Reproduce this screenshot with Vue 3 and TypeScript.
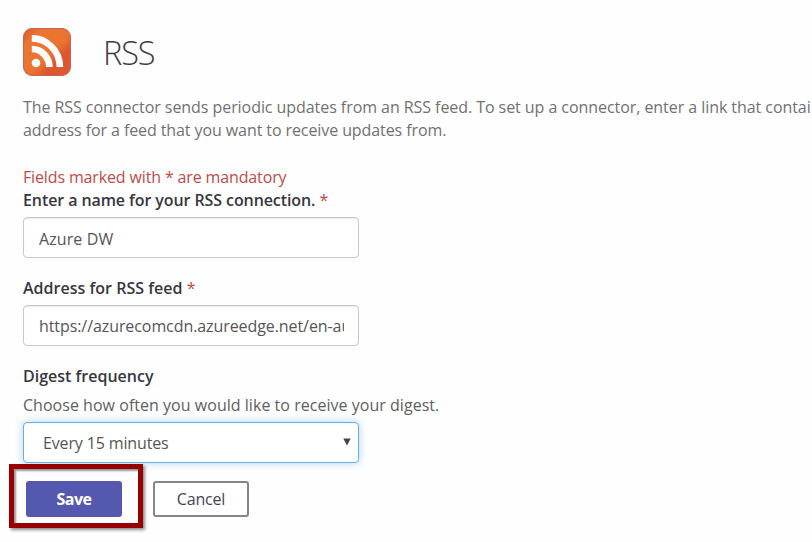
<script setup lang="ts">
import { ref } from 'vue'

const connectionName = ref<string>('Azure DW')
const feedAddress = ref<string>('https://azurecomcdn.azureedge.net/en-au/updates/feed/')
const frequencies: string[] = ['Every 15 minutes']
const frequency = ref<string>(frequencies[0])
</script>

<template>
  <main class="page">
    <header class="header">
      <svg class="logo" viewBox="0 0 48 48" aria-hidden="true">
        <defs>
          <linearGradient id="tile" x1="0" y1="0" x2="1" y2="1">
            <stop offset="0" stop-color="#d9572f" />
            <stop offset="0.2" stop-color="#ea7430" />
            <stop offset="0.55" stop-color="#ea7430" />
            <stop offset="0.72" stop-color="#db5530" />
            <stop offset="1" stop-color="#de5a30" />
          </linearGradient>
        </defs>
        <rect x="0.5" y="0.5" width="47" height="47" rx="8.5" fill="url(#tile)" stroke="#c56458" />
        <circle cx="13" cy="35" r="4.3" fill="#fff" />
        <path d="M8.8 21A17.6 18.1 0 0 1 26.4 39.1" fill="none" stroke="#fff" stroke-width="6.7" />
        <path d="M8.8 10.3A28.1 28.8 0 0 1 36.9 39.1" fill="none" stroke="#fff" stroke-width="6.7" />
      </svg>
      <h1 class="title">RSS</h1>
    </header>

    <p class="intro">
      <span class="intro-first">The RSS connector sends periodic updates from an RSS feed. To set up a connector, enter a link that contai</span><br>
      <span class="intro-second">address for a feed that you want to receive updates from.</span>
    </p>

    <form class="form" @submit.prevent>
      <p class="mandatory">Fields marked with * are mandatory</p>
      <label class="label name-label" for="name">Enter a name for your RSS connection. <span class="star">*</span></label>
      <input id="name" v-model="connectionName" class="control name" type="text">

      <label class="label gap address-label" for="address">Address for RSS feed <span class="star">*</span></label>
      <input id="address" v-model="feedAddress" class="control address" type="text">

      <label class="label gap digest-label" for="frequency">Digest frequency</label>
      <p class="hint">Choose how often you would like to receive your digest.</p>
      <div class="select-wrap">
        <select id="frequency" v-model="frequency" class="control select">
          <option v-for="item in frequencies" :key="item">{{ item }}</option>
        </select>
        <svg class="arrow" viewBox="0 0 8 8" aria-hidden="true"><path d="M0.3 0.5H7.7L4 7.5Z" fill="#444" /></svg>
      </div>

      <div class="actions">
        <div class="highlight">
          <button class="button save" type="submit">Save</button>
        </div>
        <button class="button cancel" type="button">Cancel</button>
      </div>
    </form>
  </main>
</template>

<style>
body {
  background: #fefefe;
  overflow: hidden;
}
</style>

<style scoped>
.page {
  box-sizing: border-box;
  width: 812px;
  height: 542px;
  padding: 28px 0 0 23px;
  overflow: hidden;
  font: 16px/23px "Open Sans", "Noto Sans", sans-serif;
  color: #666;
}
.header {
  display: flex;
  gap: 32px;
  height: 48px;
}
.logo {
  width: 48px;
  height: 48px;
}
.title {
  margin: 0;
  font-size: 32.5px;
  line-height: 50px;
  font-weight: 300;
  letter-spacing: -1.1px;
  color: #3c3c44;
}
p {
  margin: 0;
}
.intro {
  margin-top: 20px;
  white-space: nowrap;
  color: #717171;
}
.intro-first {
  letter-spacing: -0.06px;
}
.intro-second {
  letter-spacing: -0.09px;
}
.form {
  margin-top: 24px;
}
.mandatory,
.star {
  color: #bd4b49;
}
.mandatory {
  letter-spacing: -0.14px;
}
.label {
  display: block;
  font-weight: 600;
  color: #37373f;
}
.name-label {
  letter-spacing: -0.09px;
}
.address-label {
  letter-spacing: 0.02px;
}
.star {
  font-weight: 400;
}
.control {
  display: block;
  box-sizing: border-box;
  width: 336px;
  height: 41px;
  margin: 5px 0 0;
  padding: 3px 14px 0 15px;
  border: 1px solid #c8c8c8;
  border-radius: 4px;
  outline: none;
  background: #fff;
  box-shadow: inset 0 1px 1px rgba(0, 0, 0, 0.08);
  font: inherit;
  color: #555;
}
.name {
  letter-spacing: 0.1px;
}
.address {
  padding-top: 1px;
  letter-spacing: -0.08px;
}
.gap {
  margin-top: 19px;
}
.hint {
  margin-top: 6px;
  letter-spacing: 0.03px;
  color: #606060;
}
.select-wrap {
  position: relative;
  width: 336px;
}
.select {
  appearance: none;
  padding: 1px 30px 0 19px;
  border-color: #66afe9;
  box-shadow: inset 0 1px 1px rgba(0, 0, 0, 0.04), 0 0 8px rgba(102, 175, 233, 0.5);
  letter-spacing: -0.14px;
}
.arrow {
  position: absolute;
  right: 8px;
  top: 16px;
  width: 8px;
  height: 8px;
}
.actions {
  display: flex;
  align-items: center;
  gap: 10px;
  margin: 1px 0 0 -14px;
  position: relative;
}
.highlight {
  box-sizing: border-box;
  width: 134px;
  height: 64px;
  padding: 12px;
  border: 5px solid #960003;
  box-shadow: 2px 2px 3px rgba(0, 0, 0, 0.45), inset 2px 2px 2px rgba(0, 0, 0, 0.4);
}
.button {
  box-sizing: border-box;
  width: 96px;
  height: 36px;
  padding: 0;
  border-radius: 3px;
  font: inherit;
  letter-spacing: -0.2px;
}
.save {
  border: 0;
  background: #5558af;
  font-weight: 700;
  letter-spacing: -0.5px;
  color: #fff;
}
.cancel {
  margin-top: 6px;
  border: 2px solid #858585;
  background: #fff;
  color: #44444f;
}
</style>
